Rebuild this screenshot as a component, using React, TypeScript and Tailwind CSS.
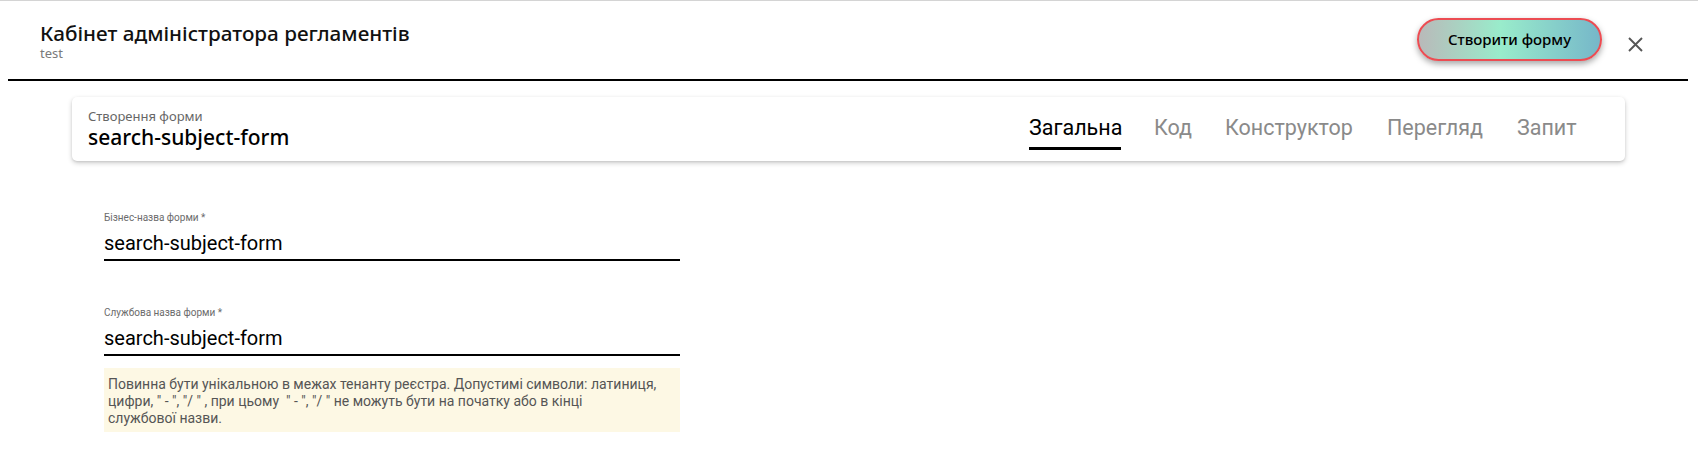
import React from "react";

const tabs = [
  { t: "Загальна", c: "w-[92px]" },
  { t: "Код", c: "ml-[33px] w-[37px]" },
  { t: "Конструктор", c: "ml-[34px] w-[130px]" },
  { t: "Перегляд", c: "ml-[32px] w-[98px]" },
  { t: "Запит", c: "ml-[32px] w-[59px]" },
];

function Field({ label, value }: { label: string; value: string }) {
  return (
    <div className="flex flex-col">
      <div className="text-[10px] leading-[12px] text-[#6b6b6b] font-['Roboto',sans-serif]">{label}</div>
      <div className="mt-[7px] border-b-2 border-black pb-[4px] text-[20px] leading-[24px] text-black font-['Roboto',sans-serif]">
        {value}
      </div>
    </div>
  );
}

export default function App() {
  return (
    <div className="w-[1698px] h-[460px] bg-white border-t border-[#d4d4d4] overflow-hidden">
      <header className="flex justify-between h-[78px] pl-[40px] pr-[55px]">
        <div className="pt-[20px] flex flex-col">
          <div className="text-[20.7px] leading-[24px] font-medium text-[#111] font-['Noto_Sans',sans-serif]">
            Кабінет адміністратора регламентів
          </div>
          <div className="text-[13px] leading-[16px] text-[#7a7a7a] font-['Noto_Sans',sans-serif]">test</div>
        </div>
        <div className="flex items-start pt-[17px]">
          <button className="h-[43px] w-[185px] rounded-full border-2 border-[#ec4c52] bg-[linear-gradient(90deg,#b9b9b9_0%,#99eccb_45%,#76b7c9_100%)] shadow-[0_3px_6px_rgba(0,0,0,0.35)] text-[15px] font-medium text-black font-['Noto_Sans',sans-serif]">
            Створити форму
          </button>
          <div className="ml-[26px] mt-[19px] w-[15px] h-[15px]">
            <svg width="15" height="15" viewBox="0 0 15 15" fill="none">
              <path d="M1 1L14 14M14 1L1 14" stroke="#555" strokeWidth="1.9" />
            </svg>
          </div>
        </div>
      </header>
      <div className="ml-[8px] mr-[10px] h-[2px] bg-black" />
      <div className="ml-[72px] mt-[16px] w-[1553px] h-[64px] rounded-[5px] bg-white shadow-[0_2px_5px_rgba(0,0,0,0.2),0_1px_2px_rgba(0,0,0,0.08)] flex">
        <div className="w-[957px] pl-[16px] pt-[11px] flex flex-col">
          <div className="text-[13px] leading-[16px] text-[#666] font-['Noto_Sans',sans-serif]">Створення форми</div>
          <div className="mt-[1px] text-[21px] leading-[25px] font-medium text-black font-['Noto_Sans',sans-serif]">search-subject-form</div>
        </div>
        <div className="flex pt-[19px]">
          {tabs.map((tab, i) => (
            <div key={tab.t} className={"flex flex-col " + tab.c}>
              <div
                className={
                  i === 0
                    ? "text-[21.5px] leading-[24px] whitespace-nowrap text-black font-['Roboto',sans-serif]"
                    : "text-[21.5px] leading-[24px] whitespace-nowrap text-[#8a8a8a] font-['Roboto',sans-serif]"
                }
              >
                {tab.t}
              </div>
              {i === 0 ? <div className="mt-[7px] h-[3px] bg-black" /> : null}
            </div>
          ))}
        </div>
      </div>
      <div className="ml-[104px] w-[576px] mt-[51px] flex flex-col">
        <Field label="Бізнес-назва форми *" value="search-subject-form" />
        <div className="mt-[46px]">
          <Field label="Службова назва форми *" value="search-subject-form" />
        </div>
        <div className="mt-[12px] bg-[#fdf8e4] pl-[4px] pr-[4px] pt-[8px] pb-[5px] text-[14px] leading-[17px] text-[#555] font-['Roboto',sans-serif]">
          Повинна бути унікальною в межах тенанту реєстра. Допустимі символи: латиниця, цифри, " - ", "/ " , при цьому &nbsp;" - ", "/ " не можуть бути на початку або в кінці
          <br />
          службової назви.
        </div>
      </div>
    </div>
  );
}
